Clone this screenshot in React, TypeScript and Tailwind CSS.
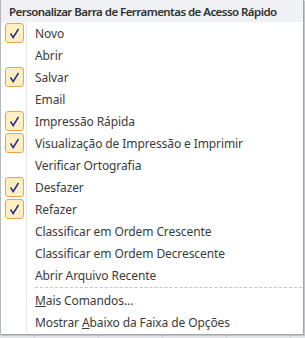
const items: { label: string; checked: boolean }[] = [
  { label: 'Novo', checked: true },
  { label: 'Abrir', checked: false },
  { label: 'Salvar', checked: true },
  { label: 'Email', checked: false },
  { label: 'Impressão Rápida', checked: true },
  { label: 'Visualização de Impressão e Imprimir', checked: true },
  { label: 'Verificar Ortografia', checked: false },
  { label: 'Desfazer', checked: true },
  { label: 'Refazer', checked: true },
  { label: 'Classificar em Ordem Crescente', checked: false },
  { label: 'Classificar em Ordem Decrescente', checked: false },
  { label: 'Abrir Arquivo Recente', checked: false },
];

function Check() {
  return (
    <div className="w-[19px] h-[20px] rounded-[3px] border border-[#f2a24c] bg-[#fdefc2] flex items-center justify-center">
      <svg width="11" height="11" viewBox="0 0 11 11">
        <path d="M1.5 5.5 L4.2 9.5 L9.5 1" fill="none" stroke="#27318a" strokeWidth="1.5" />
      </svg>
    </div>
  );
}

function Row({ children, check }: { children: React.ReactNode; check?: boolean }) {
  return (
    <div className="flex h-[22px]">
      <div className="w-[26px] shrink-0 border-r border-[#e2e3e5] flex items-center pl-[4px]">
        {check && <Check />}
      </div>
      <div className="flex items-center pl-[8px] pt-[1px] whitespace-nowrap tracking-[-0.1px]">{children}</div>
    </div>
  );
}

export default function App() {
  return (
    <div
      className="w-[305px] h-[338px] bg-[#e6e8ed] relative overflow-hidden text-[12px] text-[#3b3b3b]"
      style={{ fontFamily: '"Noto Sans", "Open Sans", sans-serif' }}
    >
      <div className="flex h-full">
        {[35, 64, 64, 64, 64].map((w, i) => (
          <div key={i} className="h-full border-r border-[#cfd2d8]" style={{ width: w }} />
        ))}
      </div>
      <div className="absolute left-0 top-0 w-[304px] h-[335px] bg-white border border-[#a2a6ab] border-t-0 border-l-[#b5b8bc] shadow-[1px_1px_1px_rgba(0,0,0,0.15)]">
        <div className="h-[22px] bg-[#eff1f4] flex items-center pl-[8px] pt-[1px] text-[11.5px] font-semibold text-[#303030] whitespace-nowrap tracking-[-0.55px]">
          Personalizar Barra de Ferramentas de Acesso Rápido
        </div>
        {items.map((it) => (
          <Row key={it.label} check={it.checked}>
            {it.label}
          </Row>
        ))}
        <div className="flex h-[3px]">
          <div className="w-[26px] shrink-0 border-r border-[#e2e3e5]" />
          <div className="flex-1 ml-[8px] mr-[1px] border-t border-dashed border-[#c5c5c5] mt-[1px]" />
        </div>
        <Row>
          <span>
            <span className="underline">M</span>ais Comandos...
          </span>
        </Row>
        <Row>
          <span>
            Mostrar <span className="underline">A</span>baixo da Faixa de Opções
          </span>
        </Row>
      </div>
    </div>
  );
}
